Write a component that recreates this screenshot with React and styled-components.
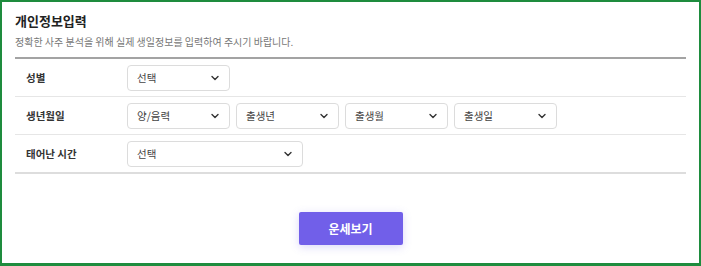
import React from "react";
import styled, { createGlobalStyle } from "styled-components";

const GlobalStyle = createGlobalStyle`
    html, body {
        margin: 0;
        padding: 0;
        background: #ffffff;
    }
    body {
        font-family: "Noto Sans CJK KR", "Noto Sans", sans-serif;
        color: #222;
    }
`;

const Chevron = () => (
    <svg width="10" height="10" viewBox="0 0 10 10" fill="none">
        <path d="M2 3.5 L5 6.5 L8 3.5" stroke="#333" strokeWidth="1.4" strokeLinecap="round" strokeLinejoin="round" />
    </svg>
);

const Select = ({ label, width }) => (
    <StSelect $width={width}>
        <span>{label}</span>
        <Chevron />
    </StSelect>
);

const App = () => {
    return (
        <>
            <GlobalStyle />
            <StFrame>
                <StTitle>개인정보입력</StTitle>
                <StDesc>정확한 사주 분석을 위해 실제 생일정보를 입력하여 주시기 바랍니다.</StDesc>

                <StTable>
                    <StRow>
                        <StLabel>성별</StLabel>
                        <StFields>
                            <Select label="선택" width={103} />
                        </StFields>
                    </StRow>
                    <StRow>
                        <StLabel>생년월일</StLabel>
                        <StFields>
                            <Select label="양/음력" width={103} />
                            <Select label="출생년" width={103} />
                            <Select label="출생월" width={103} />
                            <Select label="출생일" width={103} />
                        </StFields>
                    </StRow>
                    <StRow $last>
                        <StLabel>태어난 시간</StLabel>
                        <StFields>
                            <Select label="선택" width={176} />
                        </StFields>
                    </StRow>
                </StTable>

                <StBtnWrap>
                    <StButton>운세보기</StButton>
                </StBtnWrap>
            </StFrame>
        </>
    );
};

export default App;

const StFrame = styled.div`
    box-sizing: border-box;
    width: 701px;
    height: 266px;
    border: 2px solid #1e8c3e;
    border-bottom-width: 3px;
    padding: 10px 13px 0 13px;
`;

const StTitle = styled.h2`
    margin: 0;
    font-size: 13px;
    font-weight: 700;
    line-height: 18px;
    color: #222;
`;

const StDesc = styled.p`
    margin: 4px 0 0 0;
    font-size: 10px;
    line-height: 16px;
    color: #777;
`;

const StTable = styled.div`
    margin-top: 7px;
    border-top: 2px solid #a3a3a3;
    border-bottom: 2px solid #dddddd;
`;

const StRow = styled.div`
    display: flex;
    align-items: center;
    height: 37px;
    border-bottom: ${(p) => (p.$last ? "none" : "1px solid #e6e6e6")};
`;

const StLabel = styled.div`
    width: 112px;
    box-sizing: border-box;
    padding-left: 11px;
    font-size: 10.5px;
    font-weight: 700;
    color: #333;
`;

const StFields = styled.div`
    display: flex;
    gap: 6px;
`;

const StSelect = styled.div`
    box-sizing: border-box;
    width: ${(p) => p.$width}px;
    height: 26px;
    display: flex;
    align-items: center;
    justify-content: space-between;
    padding: 0 9px 0 9px;
    border: 1px solid #dcdcdc;
    border-radius: 4px;
    background: #fff;
    font-size: 10.5px;
    color: #444;
`;

const StBtnWrap = styled.div`
    display: flex;
    justify-content: center;
    margin-top: 38px;
`;

const StButton = styled.button`
    width: 104px;
    height: 33px;
    border: none;
    border-radius: 2px;
    background-color: #715fe9;
    color: #fff;
    font-family: inherit;
    font-size: 12px;
    font-weight: 700;
    box-shadow: 0 2px 8px rgba(113, 95, 233, 0.25);
`;
